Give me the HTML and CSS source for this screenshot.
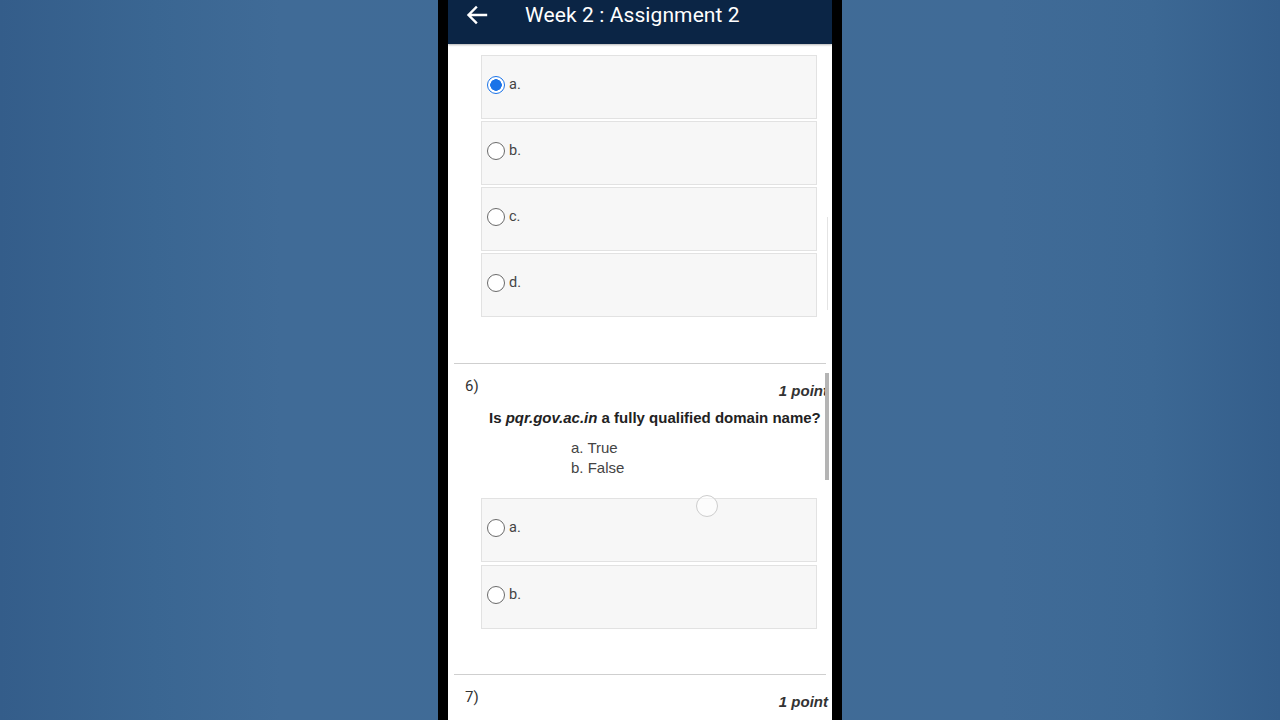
FILE: index.html
```html
<!DOCTYPE html>
<html>
<head>
<meta charset="utf-8">
<link rel="stylesheet" href="styles.css">
</head>
<body>
<div class="stage">
  <div class="phone">
    <div class="screen">
      <header class="appbar">
        <svg class="back" width="22" height="22" viewBox="0 0 22 22"><path d="M20 11H3M10 3.5L2.5 11L10 18.5" fill="none" stroke="#fff" stroke-width="2.4" stroke-linecap="square"/></svg>
        <span class="title">Week 2 : Assignment 2</span>
      </header>
      <div class="content">
        <div class="options first">
          <div class="opt"><span class="radio checked"></span><span class="lbl">a.</span></div>
          <div class="opt"><span class="radio"></span><span class="lbl">b.</span></div>
          <div class="opt"><span class="radio"></span><span class="lbl">c.</span></div>
          <div class="opt"><span class="radio"></span><span class="lbl">d.</span></div>
        </div>
        <hr class="sep">
        <section class="question">
          <div class="qhead"><span class="qnum">6)</span><span class="pts">1 point</span></div>
          <p class="qtext">Is <i>pqr.gov.ac.in</i> a fully qualified domain name?</p>
          <div class="choices"><div>a. True</div><div>b. False</div></div>
          <div class="options second">
            <div class="opt"><span class="radio"></span><span class="lbl">a.</span></div>
            <div class="opt"><span class="radio"></span><span class="lbl">b.</span></div>
            <span class="ripple"></span>
          </div>
        </section>
        <hr class="sep sep2">
        <section class="question">
          <div class="qhead"><span class="qnum">7)</span><span class="pts">1 point</span></div>
        </section>
      </div>
      <span class="scroll-faint"></span>
      <span class="scroll-thumb"></span>
    </div>
  </div>
</div>
</body>
</html>
```

FILE: styles.css
```css
html, body { margin: 0; padding: 0; }
body {
  width: 1280px;
  height: 720px;
  overflow: hidden;
  background: linear-gradient(90deg, #345d8a 0%, #3a6692 12%, #406b97 22%, #406b96 50%, #406b97 78%, #3c6894 90%, #345e8b 100%);
  font-family: Roboto, "Liberation Sans", Arial, sans-serif;
}
.stage {
  display: flex;
  justify-content: center;
  height: 720px;
}
.phone {
  width: 384px;
  height: 720px;
  background: #000;
  padding: 0 10px;
}
.screen {
  position: relative;
  width: 384px;
  height: 720px;
  background: #fff;
  overflow: hidden;
}
.appbar {
  height: 44px;
  background: #0b2545;
  display: flex;
  align-items: flex-start;
  color: #fff;
  box-shadow: 0 1px 2px rgba(0,0,0,0.3);
}
.back {
  margin: 4px 0 0 18px;
}
.title {
  margin-left: 37px;
  font-size: 21px;
  line-height: 30px;
  letter-spacing: 0.1px;
}
.content {
  padding-top: 11px;
}
.options {
  position: relative;
  display: flex;
  flex-direction: column;
  gap: 2px;
  margin: 0 15px 0 33px;
}
.options.second {
  gap: 3px;
}
.opt {
  height: 64px;
  box-sizing: border-box;
  border: 1px solid #e2e2e2;
  background: #f7f7f7;
  display: flex;
  align-items: flex-start;
  padding: 19px 0 0 5px;
}
.radio {
  width: 18px;
  height: 18px;
  box-sizing: border-box;
  border: 1px solid #6a6a6a;
  border-radius: 50%;
  background: #fff;
  margin-top: 1px;
}
.radio.checked {
  border: 1.5px solid #1a73e8;
  background: radial-gradient(circle, #1a73e8 0 5.5px, #fff 6px);
}
.lbl {
  margin-left: 4px;
  font-size: 14.5px;
  line-height: 20px;
  color: #444;
}
.sep {
  margin: 46px 6px 0 6px;
  border: 0;
  border-top: 1px solid #cfcfcf;
  height: 0;
}
.sep2 {
  margin-top: 45px;
}
.question {
  padding-top: 12px;
}
.qhead {
  display: flex;
  justify-content: space-between;
  align-items: flex-start;
  padding: 0 4px 0 17px;
  color: #333;
}
.qnum {
  font-size: 15px;
  line-height: 20px;
}
.pts {
  margin-top: 5px;
  font-family: "Liberation Sans", Arial, sans-serif;
  font-weight: bold;
  font-style: italic;
  font-size: 15px;
  line-height: 20px;
  color: #333;
}
.qtext {
  margin: 7px 0 0 41px;
  font-family: "Liberation Sans", Arial, sans-serif;
  font-weight: bold;
  font-size: 15px;
  line-height: 20px;
  color: #222;
  white-space: nowrap;
}
.choices {
  margin: 10px 0 20px 123px;
  font-family: "Liberation Sans", Arial, sans-serif;
  font-size: 15px;
  line-height: 20px;
  color: #444;
}
.ripple {
  position: absolute;
  left: 215px;
  top: -3px;
  width: 22px;
  height: 22px;
  box-sizing: border-box;
  border: 1.5px solid #cdcdcd;
  border-radius: 50%;
  background: rgba(255,255,255,0.6);
}
.scroll-thumb {
  position: absolute;
  left: 377px;
  top: 373px;
  width: 4px;
  height: 107px;
  background: #b4b4b4;
}
.scroll-faint {
  position: absolute;
  left: 379px;
  top: 217px;
  width: 1px;
  height: 93px;
  background: #e4e4e4;
}
```
